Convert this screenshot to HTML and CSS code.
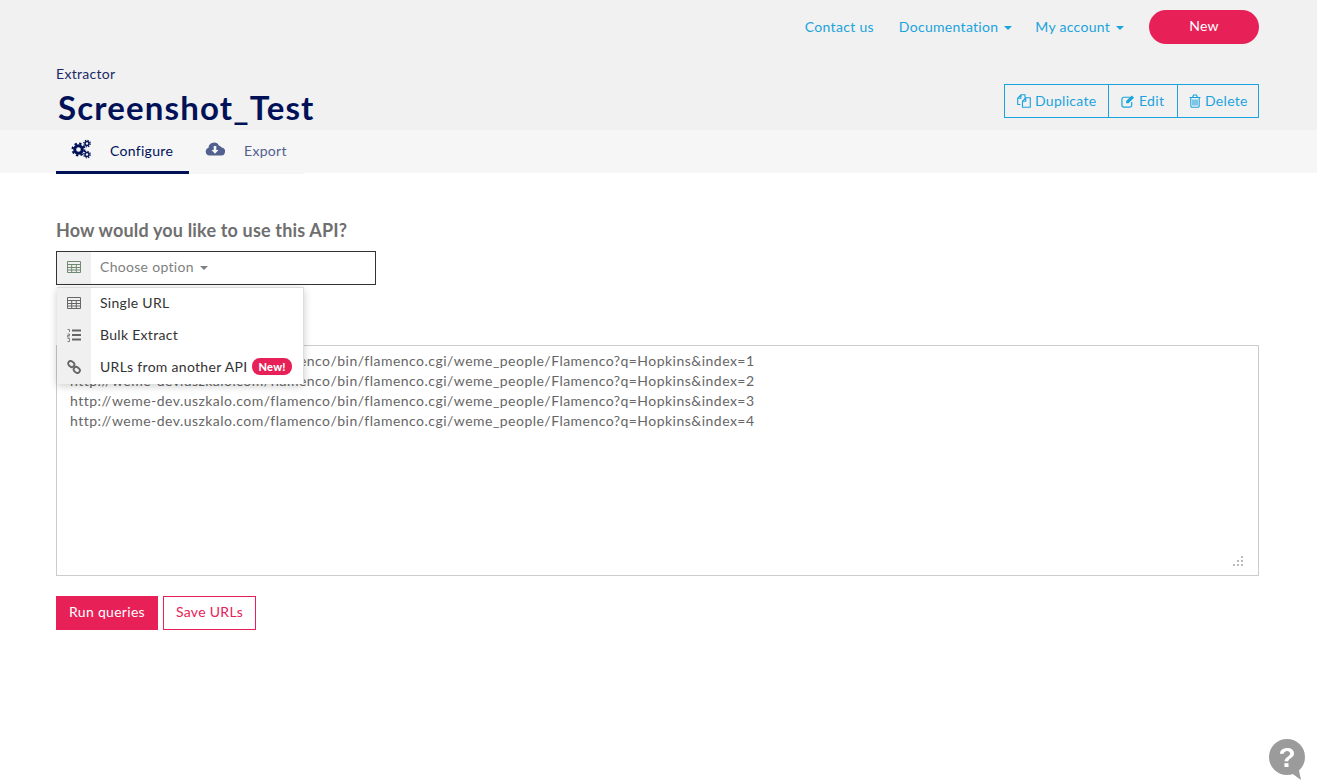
FILE: index.html
```html
<!DOCTYPE html>
<html lang="en">
<head>
  <meta charset="UTF-8" />
  <meta name="viewport" content="width=device-width, initial-scale=1.0"/>
  <title>Screenshot_Test - Extractor</title>
  <link rel="stylesheet" href="styles.css">
</head>
<body>

<header class="top">
  <nav class="nav">
    <a class="nav-link" href="#">Contact us</a>
    <a class="nav-link nav-docs" href="#">Documentation <span class="caret"></span></a>
    <a class="nav-link" href="#">My account <span class="caret"></span></a>
    <a class="new-btn" href="#">New</a>
  </nav>
  <div class="title-row">
    <div>
      <div class="kicker">Extractor</div>
      <h1>Screenshot_Test</h1>
    </div>
    <div class="actions">
      <a class="action action-dup" href="#">
        <svg class="ico" viewBox="0 0 14 14"><path d="M3.500 10.500H.7V4.200L3.900.8H8v3M3.900.8v3.400H.7M5.500 13.300V7.200L8.700 3.800h4.600v9.500zM8.700 3.800v3.400H5.500" fill="none" stroke="currentColor" stroke-width="1.100"/></svg>
        Duplicate</a>
      <a class="action action-edit" href="#">
        <svg class="ico" viewBox="0 0 15 15"><path d="M11.500 8.500V12a2 2 0 0 1-2 2H3a2 2 0 0 1-2-2V5.500a2 2 0 0 1 2-2h6.500" fill="none" stroke="currentColor" stroke-width="1.300"/><path d="M5.500 7.500 11.500 1.500 14 4l-6 6H5.500z" fill="currentColor"/></svg>
        Edit</a>
      <a class="action action-del" href="#">
        <svg class="ico-del" viewBox="0 0 12 14"><path d="M.5 3.500h11M3.500 3.500l1-2.500h3l1 2.500M1.800 3.500V12a1.300 1.300 0 0 0 1.300 1.300h5.800A1.300 1.300 0 0 0 10.200 12V3.500M4 5.500v6M6 5.500v6M8 5.500v6" fill="none" stroke="currentColor" stroke-width="1.100"/></svg>
        Delete</a>
    </div>
  </div>
</header>

<div class="tabs">
  <a class="tab active" href="#">
    <svg class="tab-ico" viewBox="0 0 20 20"><g fill="none" stroke="currentColor"><circle cx="7.500" cy="10.500" r="3.800" stroke-width="3"/><circle cx="7.500" cy="10.500" r="6" stroke-width="2" stroke-dasharray="2.400 2.300"/><circle cx="16" cy="4.500" r="2" stroke-width="1.500"/><circle cx="16" cy="4.500" r="3.300" stroke-width="1.200" stroke-dasharray="1.300 1.300"/><circle cx="16" cy="15.500" r="2" stroke-width="1.500"/><circle cx="16" cy="15.500" r="3.300" stroke-width="1.200" stroke-dasharray="1.300 1.300"/></g></svg>
    Configure</a>
  <a class="tab" href="#">
    <svg class="tab-ico" viewBox="0 0 20 16"><path d="M4.500 14.500a4 4 0 0 1-1-7.800A5.500 5.500 0 0 1 14 4.800a3.500 3.500 0 0 1 2.500 1.700 4 4 0 0 1-1 8z" fill="currentColor"/><path d="M8.700 5h2.600v4h2.200L10 12.700 6.500 9h2.200z" fill="#f6f6f6"/></svg>
    Export</a>
</div>

<main class="content">
  <h2>How would you like to use this API?</h2>

  <div class="picker">
    <div class="select">
      <span class="select-ico">
        <svg class="ico" viewBox="0 0 14 12"><path d="M.500.500h13v11H.500zM.500 3.500h13M.500 6.500h13M.500 9h13M4.700 3.500V11.500M9.300 3.500V11.500" fill="none" stroke="currentColor"/></svg>
      </span>
      <span class="select-text">Choose option <span class="caret"></span></span>
    </div>

    <ul class="menu">
      <li class="menu-item">
        <span class="menu-ico"><svg class="ico" viewBox="0 0 14 12"><path d="M.500.500h13v11H.500zM.500 3.500h13M.500 6.500h13M.500 9h13M4.700 3.500V11.500M9.300 3.500V11.500" fill="none" stroke="currentColor"/></svg></span>
        <span class="menu-text">Single URL</span>
      </li>
      <li class="menu-item">
        <span class="menu-ico"><svg class="ico" viewBox="0 0 14 13"><path d="M5 2h9M5 6.500h9M5 11h9" stroke="currentColor" stroke-width="1.800"/><path d="M.500 1h2v2.500M.500 5.500h2v1.500h-2v1.500h2M.500 10h2v3h-2" fill="none" stroke="currentColor" stroke-width=".8"/></svg></span>
        <span class="menu-text">Bulk Extract</span>
      </li>
      <li class="menu-item">
        <span class="menu-ico"><svg class="ico" viewBox="0 0 14 14"><g fill="none" stroke="currentColor" stroke-width="1.900"><rect x="1" y="1.500" width="6.500" height="5" rx="2.500" transform="rotate(40 4.200 4)"/><rect x="6.500" y="7.500" width="6.500" height="5" rx="2.500" transform="rotate(40 9.800 10)"/></g></svg></span>
        <span class="menu-text">URLs from another API</span> <span class="badge">New!</span>
      </li>
    </ul>
  </div>

  <div class="urls-wrap">
    <textarea class="urls" spellcheck="false">http://weme-dev.uszkalo.com/flamenco/bin/flamenco.cgi/weme_people/Flamenco?q=Hopkins&amp;index=1
http://weme-dev.uszkalo.com/flamenco/bin/flamenco.cgi/weme_people/Flamenco?q=Hopkins&amp;index=2
http://weme-dev.uszkalo.com/flamenco/bin/flamenco.cgi/weme_people/Flamenco?q=Hopkins&amp;index=3
http://weme-dev.uszkalo.com/flamenco/bin/flamenco.cgi/weme_people/Flamenco?q=Hopkins&amp;index=4</textarea>
    <svg class="grip" viewBox="0 0 10 10" width="10" height="10"><path d="M8 0h2v2H8zM4 4h2v2H4zM8 4h2v2H8zM0 8h2v2H0zM4 8h2v2H4zM8 8h2v2H8z" fill="#bbb"/></svg>
  </div>

  <div class="buttons">
    <button class="btn primary">Run queries</button>
    <button class="btn outline">Save URLs</button>
  </div>
</main>

<a class="help" href="#">
  <svg viewBox="0 0 38 42" width="38" height="42"><circle cx="19" cy="19" r="18" fill="#9b9b9b"/><path d="M22 34l11 8-3-14z" fill="#9b9b9b"/><text x="19" y="29" text-anchor="middle" class="help-mark">?</text></svg>
</a>

</body>
</html>
```

FILE: styles.css
```css
body {
  margin: 0;
  font-family: Lato, Arial, sans-serif;
  font-size: 14px;
  color: #001158;
  background-color: #fff;
  height: 780px;
  overflow: hidden;
}

a {
  text-decoration: none;
}

.top {
  background-color: #f1f1f1;
  height: 130px;
  padding: 10px 58px 0 56px;
  box-sizing: border-box;
}

.nav {
  display: flex;
  justify-content: flex-end;
  align-items: center;
  height: 34px;
}

.nav-link {
  color: #1ba3dd;
  margin-right: 25px;
  margin-bottom: 2px;
  letter-spacing: 0.3px;
}

.nav-docs {
  margin-right: 23px;
}

.caret {
  display: inline-block;
  width: 0;
  height: 0;
  margin-left: 2px;
  vertical-align: middle;
  border-top: 4px solid;
  border-left: 4px solid transparent;
  border-right: 4px solid transparent;
}

.new-btn {
  width: 110px;
  height: 34px;
  line-height: 32px;
  text-align: center;
  border-radius: 17px;
  background-color: #e72157;
  color: #fff;
  letter-spacing: 0.3px;
}

.title-row {
  display: flex;
  justify-content: space-between;
  margin-top: 22px;
}

.kicker {
  font-size: 14px;
  line-height: 16px;
  letter-spacing: 0.3px;
  color: #1a2a68;
}

h1 {
  margin: 2px 0 0 2px;
  font-size: 33px;
  line-height: 46px;
  font-weight: 700;
  letter-spacing: 1.15px;
}

.actions {
  display: flex;
  height: 34px;
  margin-top: 18px;
  border: 1px solid #1ba3dd;
  box-sizing: border-box;
}

.action {
  display: flex;
  align-items: center;
  box-sizing: border-box;
  padding-bottom: 1px;
  color: #1ba3dd;
  border-left: 1px solid #1ba3dd;
  letter-spacing: 0.3px;
}

.action:first-child {
  border-left: none;
}

.action-dup {
  width: 103px;
  padding-left: 12px;
  gap: 4px;
}

.action-edit {
  width: 69px;
  padding-left: 12px;
  gap: 4px;
}

.action-del {
  width: 81px;
  padding-left: 11px;
  gap: 4px;
}

.ico {
  width: 14px;
  height: 14px;
}

.ico-del {
  width: 12px;
  height: 14px;
}

.tabs {
  display: flex;
  height: 43px;
  padding-left: 56px;
  background-color: #f6f6f6;
}

.tab {
  display: flex;
  align-items: center;
  height: 44px;
  box-sizing: border-box;
  padding: 0 18px 0 16px;
  gap: 19px;
  color: #52608f;
  letter-spacing: 0.3px;
  background-color: #f6f6f6;
  border-bottom: 3px solid #f6f6f6;
}

.tab.active {
  padding: 0 15px;
  width: 133px;
  color: #001158;
  border-bottom-color: #001158;
}

.tab-ico {
  width: 20px;
  height: 20px;
  margin-bottom: 4px;
}

.content {
  padding: 46px 58px 0 56px;
}

h2 {
  margin: 0;
  font-size: 18px;
  line-height: 22px;
  font-weight: 700;
  letter-spacing: 0.17px;
  color: #6f6f6f;
}

.picker {
  position: relative;
  margin-top: 10px;
}

.select {
  display: flex;
  width: 320px;
  height: 34px;
  box-sizing: border-box;
  border: 1px solid #333;
}

.select-ico {
  width: 34px;
  display: flex;
  align-items: center;
  justify-content: center;
  background-color: #f0f0f0;
  color: #6f8a6f;
  padding-bottom: 2px;
  box-sizing: border-box;
}

.select-text {
  line-height: 30px;
  padding-left: 9px;
  color: #808080;
  letter-spacing: 0.3px;
}

.menu {
  position: absolute;
  z-index: 10;
  top: 36px;
  left: 1px;
  width: 247px;
  margin: 0;
  padding: 0;
  list-style: none;
  box-sizing: border-box;
  background-color: #fff;
  border-top: 1px solid #ddd;
  border-right: 1px solid #ddd;
  box-shadow: 0 2px 8px rgba(0, 0, 0, 0.2);
}

.menu-item {
  display: flex;
  align-items: center;
  height: 32px;
  color: #333;
  letter-spacing: 0.3px;
}

.menu-ico {
  width: 34px;
  height: 32px;
  box-sizing: border-box;
  padding-bottom: 2px;
  margin-right: 9px;
  display: flex;
  align-items: center;
  justify-content: center;
  background-color: #f0f0f0;
  color: #666;
}

.menu-text {
  padding-bottom: 4px;
}

.badge {
  margin-left: 5px;
  margin-bottom: 3px;
  padding: 0 6px;
  border-radius: 8px;
  background-color: #e72157;
  color: #fff;
  font-size: 11px;
  line-height: 17px;
  font-weight: 900;
}

.urls-wrap {
  position: relative;
  margin-top: 60px;
}

.urls {
  display: block;
  width: 100%;
  height: 231px;
  box-sizing: border-box;
  padding: 5px 13px;
  border: 1px solid #ccc;
  outline: none;
  resize: none;
  font-family: Lato, Arial, sans-serif;
  font-size: 14px;
  line-height: 20px;
  color: #666;
  letter-spacing: 0.47px;
}

.grip {
  position: absolute;
  right: 16px;
  bottom: 10px;
}

.buttons {
  display: flex;
  gap: 5px;
  margin-top: 20px;
}

.btn {
  height: 34px;
  padding: 0 12px 3px;
  font-family: Lato, Arial, sans-serif;
  font-size: 14px;
  letter-spacing: 0.3px;
  border: 1px solid #e72157;
}

.primary {
  background-color: #e72157;
  color: #fff;
}

.outline {
  background-color: #fff;
  color: #e72157;
}

.help {
  position: fixed;
  right: 11px;
  bottom: -3px;
}

.help-mark {
  font-family: "Liberation Sans", Arial, sans-serif;
  font-size: 28px;
  font-weight: 700;
  fill: #fff;
}
```
